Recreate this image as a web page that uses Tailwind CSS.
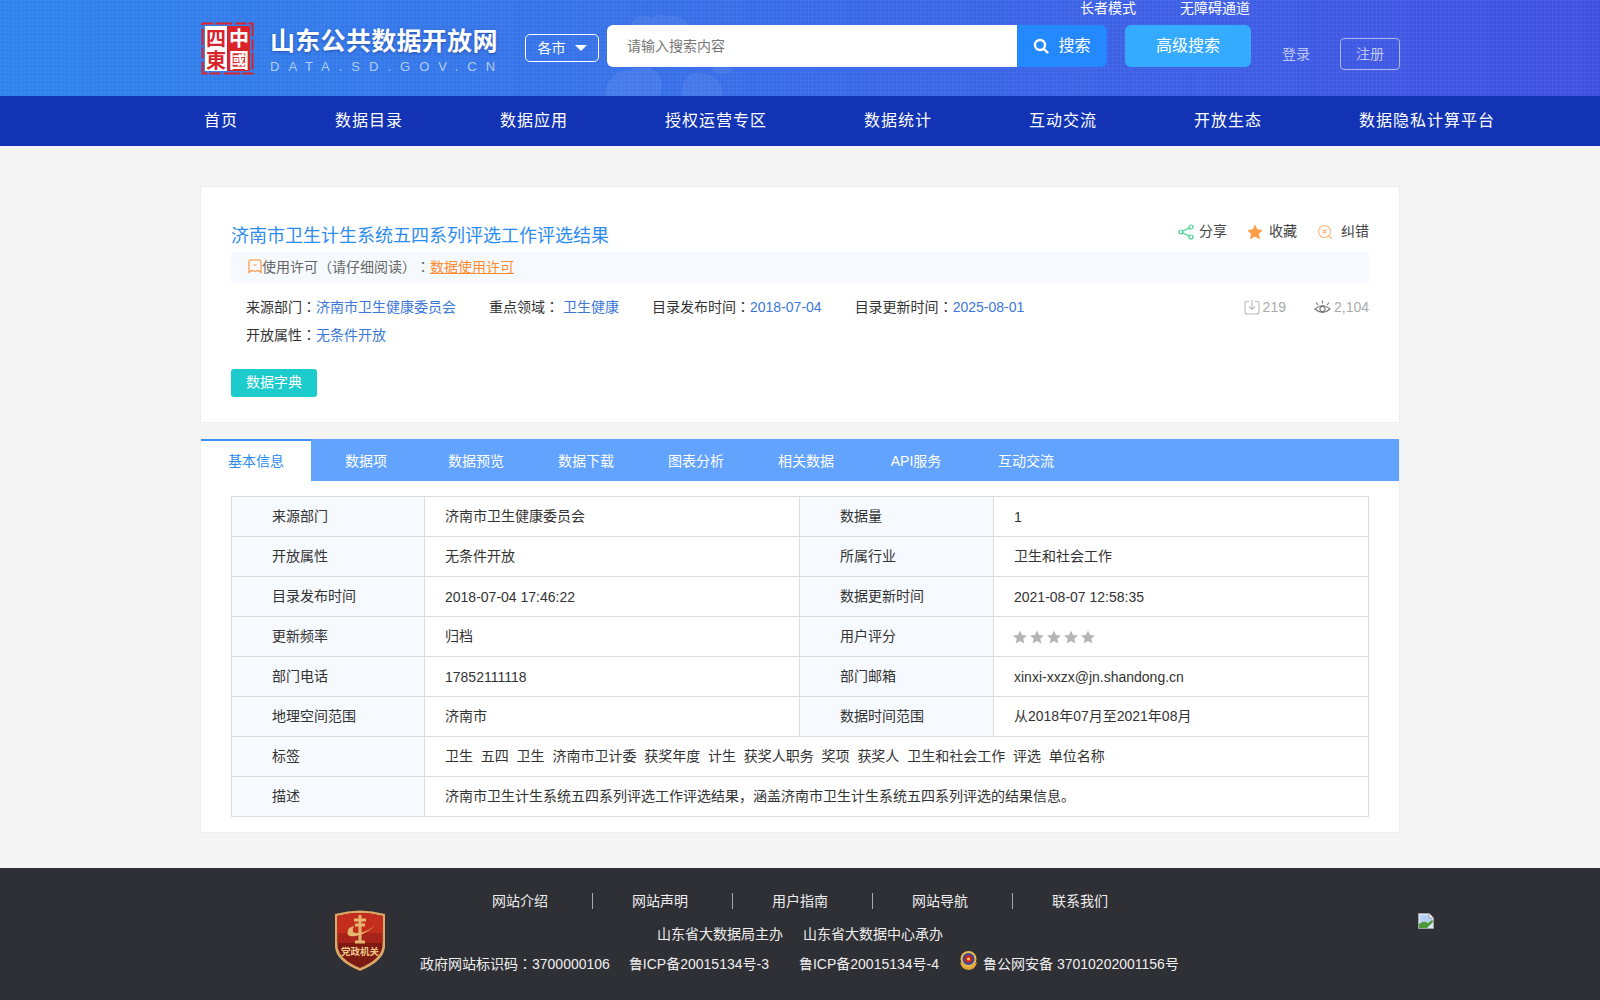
<!DOCTYPE html>
<html lang="zh-CN">
<head>
    <meta charset="UTF-8">
    <title>山东公共数据开放网</title>
    <script src="https://cdn.jsdelivr.net/npm/@tailwindcss/browser@4"></script>
</head>
<body class="bg-[#f5f5f5] text-[14px] text-[#333] font-['Liberation_Sans','Noto_Sans_CJK_SC',sans-serif]">
    <!-- Header -->
    <header class="relative h-[96px] overflow-hidden bg-gradient-to-r from-[#2f84ec] to-[#4150e2]">
        <div class="absolute inset-0 bg-[linear-gradient(rgba(255,255,255,0.035)_1px,transparent_1px),linear-gradient(90deg,rgba(255,255,255,0.035)_1px,transparent_1px)] bg-[size:4px_4px]"></div>
        <svg class="absolute left-[590px] top-[8px]" width="170" height="88" viewBox="0 0 170 88" fill="#fff" fill-opacity="0.07">
            <path d="M44 12 q8 -8 18 -2 q6 -6 14 -2 q12 -2 20 6 q8 4 4 10 h-58 q-4 -6 2 -12 z"/>
            <path d="M22 70 q6 -8 16 -8 q8 -4 16 -2 q8 -2 14 6 q6 8 2 22 h-54 q-2 -10 6 -18 z"/>
            <path d="M96 70 q8 -8 20 -4 q10 2 14 10 q4 6 2 12 h-40 q-2 -10 4 -18 z"/>
            <path d="M122 60 q10 -4 22 2 q-6 4 -14 4 q-6 0 -8 -6 z"/>
        </svg>
        <div class="relative w-[1200px] mx-auto">
            <div class="h-[22px] flex pl-[880px] gap-[44px] text-white leading-[16px]">
                <a>长者模式</a>
                <a>无障碍通道</a>
            </div>
            <div class="flex items-start">
                <!-- seal logo -->
                <svg class="shrink-0 ml-[1px]" width="53" height="53" viewBox="0 0 53 53">
                    <rect x="1.5" y="1.5" width="50" height="50" fill="none" stroke="#d8232a" stroke-width="2" stroke-dasharray="11 2 17 3"/>
                    <rect x="4" y="4" width="22" height="45" fill="#fff"/>
                    <rect x="26" y="4" width="23" height="45" fill="#d8232a"/>
                    <text x="15" y="24" text-anchor="middle" font-size="20" font-weight="700" fill="#d8232a">四</text>
                    <text x="15" y="46" text-anchor="middle" font-size="20" font-weight="700" fill="#d8232a">東</text>
                    <text x="38" y="24" text-anchor="middle" font-size="20" font-weight="700" fill="#fff">中</text>
                    <text x="38" y="46" text-anchor="middle" font-size="20" font-weight="700" fill="#fff">國</text>
                </svg>
                <div class="w-[271px] ml-[16px] mt-[3px] shrink-0">
                    <div class="text-[25px] leading-[32px] font-bold tracking-[0.3px] text-white whitespace-nowrap [text-shadow:0_1px_3px_rgba(0,0,60,0.35)]">山东公共数据开放网</div>
                    <div class="text-[13px] leading-[16px] mt-[2px] tracking-[9px] text-[#b0cdf5] whitespace-nowrap">DATA.SD.GOV.CN</div>
                </div>
                <button class="mt-[12px] ml-[-16px] w-[74px] h-[28px] shrink-0 rounded-[5px] border border-white text-white flex items-center justify-center gap-[9px]">
                    <span>各市</span>
                    <span class="w-0 h-0 border-x-[6px] border-x-transparent border-t-[6px] border-t-white"></span>
                </button>
                <div class="mt-[3px] ml-[8px] flex w-[500px] h-[42px] shrink-0">
                    <div class="flex-1 bg-white rounded-l-[6px] pl-[20px] leading-[42px] text-[#777]">请输入搜索内容</div>
                    <button class="w-[90px] bg-[#2488ff] rounded-r-[6px] text-white text-[16px] flex items-center justify-center gap-[9px]">
                        <svg width="16" height="16" viewBox="0 0 16 16" fill="none" stroke="#fff" stroke-width="2.4"><circle cx="7" cy="7" r="5"/><path d="M10.8 10.8 L14.5 14.5" stroke-linecap="round"/></svg>
                        <span>搜索</span>
                    </button>
                </div>
                <button class="mt-[3px] ml-[18px] w-[126px] h-[42px] shrink-0 bg-[#35abff] rounded-[6px] text-white text-[16px]">高级搜索</button>
                <a class="mt-[24px] ml-[31px] text-[#bfc8f2] leading-[16px] shrink-0">登录</a>
                <button class="mt-[16px] ml-[30px] w-[60px] h-[32px] shrink-0 border border-[#aeb8ee] rounded-[4px] text-[#bfc8f2]">注册</button>
            </div>
        </div>
    </header>

    <!-- Nav -->
    <nav class="h-[50px] bg-[#1234b4]">
        <div class="w-[1200px] mx-auto pl-[4px] flex gap-[97px] leading-[49px] text-[16px] tracking-[1px] text-white whitespace-nowrap">
            <a>首页</a>
            <a>数据目录</a>
            <a>数据应用</a>
            <a>授权运营专区</a>
            <a>数据统计</a>
            <a>互动交流</a>
            <a>开放生态</a>
            <a>数据隐私计算平台</a>
        </div>
    </nav>

    <main class="w-[1200px] mx-auto pt-[40px] pb-[35px]">
        <!-- Summary card -->
        <section class="h-[237px] bg-white border border-[#eee] px-[30px] pt-[34px]">
            <div class="h-[31px] flex justify-between">
                <h1 class="text-[18px] leading-[30px] text-[#2b8cf0]">济南市卫生计生系统五四系列评选工作评选结果</h1>
                <div class="flex h-[21px] items-center text-[#444]">
                    <svg width="16" height="16" viewBox="0 0 16 16" fill="none" stroke="#45d08c" stroke-width="1.2"><circle cx="13" cy="3" r="2"/><circle cx="3" cy="8" r="2"/><circle cx="13" cy="13" r="2"/><path d="M5 7 L11 4 M5 9 L11 12"/></svg>
                    <span class="ml-[5px]">分享</span>
                    <svg class="ml-[20px]" width="16" height="16" viewBox="0 0 16 16" fill="#ff9c45"><path d="M8 1.5 L10 5.8 L15 6.4 L11.3 9.6 L12.4 14.5 L8 12 L3.6 14.5 L4.7 9.6 L1 6.4 L6 5.8 Z" stroke="#ff9c45" stroke-linejoin="round"/></svg>
                    <span class="ml-[6px]">收藏</span>
                    <svg class="ml-[20px]" width="16" height="16" viewBox="0 0 16 16" fill="none" stroke="#ffb780" stroke-width="1.1"><circle cx="7.5" cy="7.5" r="6"/><path d="M5.5 5.5 L9.5 9.5 M9.5 5.5 L5.5 9.5 M12 12 L15 15"/></svg>
                    <span class="ml-[8px]">纠错</span>
                </div>
            </div>
            <div class="h-[31px] bg-[#f6f9fe] pl-[17px] flex items-center text-[#666]">
                <svg class="-mt-[2px]" width="14" height="15" viewBox="0 0 14 15" fill="none" stroke="#ff8c2e" stroke-width="1.1"><path d="M2.5 1 H11.5 Q13 1 13 2.5 V13.5 L10 11.5 Q7 13 4 11.5 L1 13.5 V2.5 Q1 1 2.5 1 Z M5.5 6 H8.5"/></svg>
                <span class="[text-spacing-trim:space-all]">使用许可（请仔细阅读）<span lang="ja">：</span></span>
                <a class="text-[#ff8c2e] underline">数据使用许可</a>
            </div>
            <div class="h-[28px] mt-[10px] pl-[15px] flex items-center whitespace-nowrap">
                <span>来源部门<span lang="ja">：</span><a class="text-[#3b78d8]">济南市卫生健康委员会</a></span>
                <span class="ml-[33px]">重点领域<span lang="ja">：</span><a class="ml-[4px] text-[#3b78d8]">卫生健康</a></span>
                <span class="ml-[33px]">目录发布时间<span lang="ja">：</span><a class="text-[#3b78d8]">2018-07-04</a></span>
                <span class="ml-[33px]">目录更新时间<span lang="ja">：</span><a class="text-[#3b78d8]">2025-08-01</a></span>
                <div class="ml-auto flex items-center text-[#aaa]">
                    <svg width="16" height="16" viewBox="0 0 16 16" fill="none" stroke="#bbb" stroke-width="1.1"><path d="M5 2.5 H2.5 Q1 2.5 1 4 V13 Q1 15 3 15 H13 Q15 15 15 13 V4 Q15 2.5 13.5 2.5 H11 M8 1 V10 M5 7.5 L8 10.5 L11 7.5"/></svg>
                    <span class="ml-[3px]">219</span>
                    <svg class="ml-[28px]" width="17" height="17" viewBox="0 0 17 17" fill="none" stroke="#777" stroke-width="1.1"><path d="M1 10 Q8.5 3 16 10 Q8.5 17 1 10 Z"/><circle cx="8.5" cy="10" r="2.6"/><path d="M2 3.5 L4 6 M15 3.5 L13 6 M8.5 1.5 V4.5"/></svg>
                    <span class="ml-[3px]">2,104</span>
                </div>
            </div>
            <div class="h-[28px] pl-[15px] flex items-center">
                <span>开放属性<span lang="ja">：</span><a class="text-[#3b78d8]">无条件开放</a></span>
            </div>
            <button class="block mt-[20px] w-[86px] h-[28px] pb-[2px] rounded-[3px] bg-[#1ccbcb] text-white">数据字典</button>
        </section>

        <!-- Tabs + table -->
        <section class="mt-[16px] h-[394px] bg-white border-x border-b border-[#eee]">
            <div class="h-[42px] bg-[#62a3ff] flex text-white text-center leading-[44px]">
                <a class="w-[110px] bg-white border-t-2 border-[#3b8ff5] text-[#2b8cf0] leading-[40px]">基本信息</a>
                <a class="w-[110px]">数据项</a>
                <a class="w-[110px]">数据预览</a>
                <a class="w-[110px]">数据下载</a>
                <a class="w-[110px]">图表分析</a>
                <a class="w-[110px]">相关数据</a>
                <a class="w-[110px]">API服务</a>
                <a class="w-[110px]">互动交流</a>
            </div>
            <div class="px-[30px] pt-[15px]">
                <table class="w-full table-fixed border-collapse [&_td]:h-[40px] [&_td]:border [&_td]:border-[#ddd] [&_td]:pl-[20px]">
                    <colgroup>
                        <col class="w-[193px]">
                        <col class="w-[375px]">
                        <col class="w-[194px]">
                        <col>
                    </colgroup>
                    <tbody>
                        <tr>
                            <td class="bg-[#f6f9fe] !pl-[40px]">来源部门</td><td>济南市卫生健康委员会</td>
                            <td class="bg-[#f6f9fe] !pl-[40px]">数据量</td><td class="pt-[2px]">1</td>
                        </tr>
                        <tr>
                            <td class="bg-[#f6f9fe] !pl-[40px]">开放属性</td><td>无条件开放</td>
                            <td class="bg-[#f6f9fe] !pl-[40px]">所属行业</td><td>卫生和社会工作</td>
                        </tr>
                        <tr>
                            <td class="bg-[#f6f9fe] !pl-[40px]">目录发布时间</td><td class="pt-[2px]">2018-07-04 17:46:22</td>
                            <td class="bg-[#f6f9fe] !pl-[40px]">数据更新时间</td><td class="pt-[2px]">2021-08-07 12:58:35</td>
                        </tr>
                        <tr>
                            <td class="bg-[#f6f9fe] !pl-[40px]">更新频率</td><td>归档</td>
                            <td class="bg-[#f6f9fe] !pl-[40px]">用户评分</td>
                            <td>
                                <div class="flex gap-[3px] -ml-[1px]">
                                    <svg width="14" height="14" viewBox="0 0 16 16" fill="#b5b5b5"><path d="M8 .5 L10.3 5.6 L16 6.2 L11.7 9.9 L13 15.5 L8 12.6 L3 15.5 L4.3 9.9 L0 6.2 L5.7 5.6 Z"/></svg>
                                    <svg width="14" height="14" viewBox="0 0 16 16" fill="#b5b5b5"><path d="M8 .5 L10.3 5.6 L16 6.2 L11.7 9.9 L13 15.5 L8 12.6 L3 15.5 L4.3 9.9 L0 6.2 L5.7 5.6 Z"/></svg>
                                    <svg width="14" height="14" viewBox="0 0 16 16" fill="#b5b5b5"><path d="M8 .5 L10.3 5.6 L16 6.2 L11.7 9.9 L13 15.5 L8 12.6 L3 15.5 L4.3 9.9 L0 6.2 L5.7 5.6 Z"/></svg>
                                    <svg width="14" height="14" viewBox="0 0 16 16" fill="#b5b5b5"><path d="M8 .5 L10.3 5.6 L16 6.2 L11.7 9.9 L13 15.5 L8 12.6 L3 15.5 L4.3 9.9 L0 6.2 L5.7 5.6 Z"/></svg>
                                    <svg width="14" height="14" viewBox="0 0 16 16" fill="#b5b5b5"><path d="M8 .5 L10.3 5.6 L16 6.2 L11.7 9.9 L13 15.5 L8 12.6 L3 15.5 L4.3 9.9 L0 6.2 L5.7 5.6 Z"/></svg>
                                </div>
                            </td>
                        </tr>
                        <tr>
                            <td class="bg-[#f6f9fe] !pl-[40px]">部门电话</td><td class="pt-[2px]">17852111118</td>
                            <td class="bg-[#f6f9fe] !pl-[40px]">部门邮箱</td><td class="pt-[2px]">xinxi-xxzx@jn.shandong.cn</td>
                        </tr>
                        <tr>
                            <td class="bg-[#f6f9fe] !pl-[40px]">地理空间范围</td><td>济南市</td>
                            <td class="bg-[#f6f9fe] !pl-[40px]">数据时间范围</td><td>从2018年07月至2021年08月</td>
                        </tr>
                        <tr>
                            <td class="bg-[#f6f9fe] !pl-[40px]">标签</td>
                            <td colspan="3">
                                <div class="flex gap-[7.8px]">
                                    <span>卫生</span><span>五四</span><span>卫生</span><span>济南市卫计委</span><span>获奖年度</span><span>计生</span><span>获奖人职务</span><span>奖项</span><span>获奖人</span><span>卫生和社会工作</span><span>评选</span><span>单位名称</span>
                                </div>
                            </td>
                        </tr>
                        <tr>
                            <td class="bg-[#f6f9fe] !pl-[40px]">描述</td>
                            <td colspan="3">济南市卫生计生系统五四系列评选工作评选结果，涵盖济南市卫生计生系统五四系列评选的结果信息。</td>
                        </tr>
                    </tbody>
                </table>
            </div>
        </section>
    </main>

    <!-- Footer -->
    <footer class="h-[132px] bg-[#2e3035] text-[#eee] overflow-hidden">
        <div class="relative w-[1200px] mx-auto h-full">
            <div class="pl-[292px] pt-[25px] flex leading-[16px]">
                <a class="pr-[44px] border-r border-[#aaa]">网站介绍</a>
                <a class="pl-[39px] pr-[44px] border-r border-[#aaa]">网站声明</a>
                <a class="pl-[39px] pr-[44px] border-r border-[#aaa]">用户指南</a>
                <a class="pl-[39px] pr-[44px] border-r border-[#aaa]">网站导航</a>
                <a class="pl-[39px]">联系我们</a>
            </div>
            <div class="mt-[17px] pl-[457px] flex gap-[20px] leading-[16px]">
                <span>山东省大数据局主办</span>
                <span>山东省大数据中心承办</span>
            </div>
            <div class="mt-[5px] pl-[220px] flex items-end h-[27px] leading-[20px] whitespace-nowrap">
                <span>政府网站标识码<span lang="ja">：</span>3700000106</span>
                <span class="ml-[19px]">鲁ICP备20015134号-3</span>
                <span class="ml-[30px]">鲁ICP备20015134号-4</span>
                <svg class="ml-[20px] mb-[3px]" width="19" height="21" viewBox="0 0 19 21">
                    <path d="M1 12 Q2 19 9.5 20 Q17 19 18 12 L15 14 H4 Z" fill="#e0a83c"/>
                    <circle cx="9.5" cy="9" r="8" fill="#e8b84a"/>
                    <circle cx="9.5" cy="9" r="6" fill="#2a4aa8"/>
                    <circle cx="9.5" cy="9" r="4" fill="#c8281e"/>
                    <circle cx="9.5" cy="9" r="1.6" fill="#f2d060"/>
                </svg>
                <span class="ml-[5px]">鲁公网安备 37010202001156号</span>
            </div>
            <!-- party badge -->
            <svg class="absolute left-[134px] top-[41px]" width="52" height="62" viewBox="0 0 52 62">
                <path d="M1 5 Q26 -2 51 5 V38 Q50 52 26 62 Q2 52 1 38 Z" fill="#d9a866"/>
                <path d="M3.5 7 Q26 1 48.5 7 V37 Q47.5 50 26 59 Q4.5 50 3.5 37 Z" fill="#7a1a12"/>
                <path d="M3.5 7 Q26 1 48.5 7 V34 H3.5 Z" fill="#a8231a"/>
                <path d="M3.5 7 Q26 1 48.5 7 V24 H3.5 Z" fill="#c22d1c"/>
                <path d="M26 6 V33 M20 11 H32 M21 16 H31 M21 33 H31" stroke="#e6b56e" stroke-width="3" fill="none"/>
                <path d="M15 19 Q10 29 22 27 Q36 24 42 14 Q36 23 24 24 Q16 25 20 17 Z" fill="#e6b56e"/>
                <text x="26" y="46" text-anchor="middle" font-size="9.5" font-weight="700" fill="#f0c88a">党政机关</text>
            </svg>
            <!-- missing image glyph -->
            <svg class="absolute left-[1218px] top-[45px]" width="16" height="16" viewBox="0 0 16 16">
                <path d="M.5 .5 H11 L15.5 5 V15.5 H.5 Z" fill="#dfe8f5" stroke="#a0a0a0"/>
                <path d="M2 2 H10.5 L14 5.5 V9 H2 Z" fill="#b5d0f0"/>
                <path d="M1 15 V11 Q6 7 10 10 L14 7 L15 8 V9 L9 15 Z" fill="#4d9a3c"/>
                <path d="M11 .5 V5 H15.5" fill="#fff" stroke="#a0a0a0"/>
            </svg>
        </div>
    </footer>
</body>
</html>
